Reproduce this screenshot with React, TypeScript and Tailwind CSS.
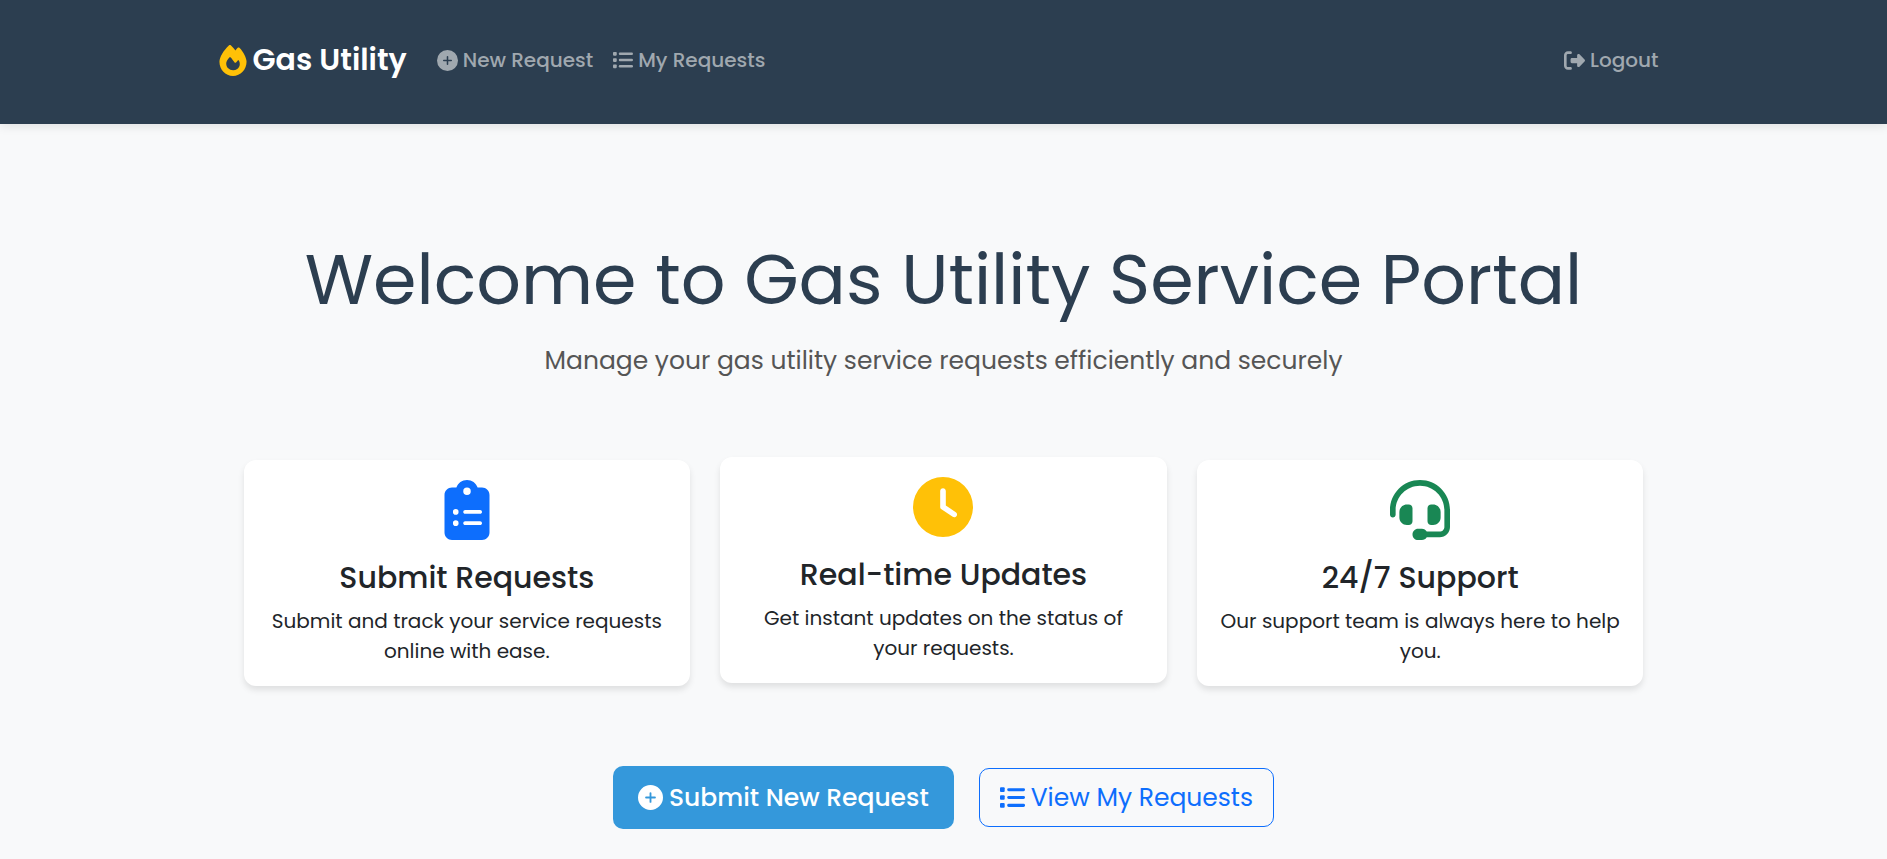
import React from "react";
import {
  FaClipboardList,
  FaClock,
  FaFire,
  FaHeadset,
  FaRightFromBracket,
} from "react-icons/fa6";

function PlusCircle({ className }: { className: string }) {
  return (
    <svg viewBox="0 0 512 512" fill="currentColor" className={className} aria-hidden="true">
      <path
        fillRule="evenodd"
        d="M256 0a256 256 0 1 1 0 512a256 256 0 1 1 0-512zM237 165v72h-72a19 19 0 0 0 0 38h72v72a19 19 0 0 0 38 0v-72h72a19 19 0 0 0 0-38h-72v-72a19 19 0 0 0-38 0z"
      />
    </svg>
  );
}

function ListIcon({ className }: { className: string }) {
  return (
    <svg viewBox="0 0 512 512" fill="currentColor" className={className} aria-hidden="true">
      <rect x="0" y="48" width="96" height="96" rx="20" />
      <rect x="0" y="208" width="96" height="96" rx="20" />
      <rect x="0" y="368" width="96" height="96" rx="20" />
      <rect x="148" y="64" width="364" height="64" rx="30" />
      <rect x="148" y="224" width="364" height="64" rx="30" />
      <rect x="148" y="384" width="364" height="64" rx="30" />
    </svg>
  );
}

const features = [
  {
    title: "Submit Requests",
    text: "Submit and track your service requests online with ease.",
    icon: <FaClipboardList className="size-[60px] text-[#0d6efd]" />,
    raised: false,
  },
  {
    title: "Real-time Updates",
    text: "Get instant updates on the status of your requests.",
    icon: <FaClock className="size-[60px] text-[#ffc107]" />,
    raised: true,
  },
  {
    title: "24/7 Support",
    text: "Our support team is always here to help you.",
    icon: <FaHeadset className="size-[60px] text-[#198754]" />,
    raised: false,
  },
];

const navLink =
  "flex items-center gap-[5px] px-[10px] text-[20px] leading-[30px] font-medium text-[#a0a8af] hover:text-white";

export default function App() {
  return (
    <div className="min-h-screen bg-[#f8f9fa] font-['Poppins','Inter',sans-serif] text-[20px] leading-[30px] text-[#212529]">
      <header className="bg-[#2c3e50] pt-10 pb-11 shadow-[0_2px_10px_rgba(0,0,0,0.1)]">
        <nav className="mx-auto flex max-w-[1450px] items-center">
          <a href="#" className="mr-5 flex items-center gap-[6px] text-[30px] leading-[40px] font-semibold text-white">
            <FaFire className="h-[31px] w-[28px] text-[#ffc107]" />
            Gas Utility
          </a>
          <a href="#new" className={navLink}>
            <PlusCircle className="size-[21px]" />
            New Request
          </a>
          <a href="#requests" className={navLink}>
            <ListIcon className="size-5" />
            My Requests
          </a>
          <a href="#logout" className={navLink + " ml-auto"}>
            <FaRightFromBracket className="size-[21px]" />
            Logout
          </a>
        </nav>
      </header>
      <main className="mx-auto max-w-[1400px] pt-[114px] text-center">
        <h1 className="text-[70px] leading-[84px] font-normal text-[#2c3e50]">
          Welcome to Gas Utility Service Portal
        </h1>
        <p className="mt-5 text-[25px] leading-[38px] text-[#555555]">
          Manage your gas utility service requests efficiently and securely
        </p>
        <section className="mt-20 grid grid-cols-3 gap-[30px]">
          {features.map((f) => (
            <article
              key={f.title}
              className={
                "flex flex-col items-center rounded-xl bg-white p-5 shadow-[0_4px_6px_rgba(0,0,0,0.1)]" +
                (f.raised ? " -translate-y-[3px]" : "")
              }
            >
              {f.icon}
              <h2 className="mt-5 text-[30px] leading-[36px] font-medium">{f.title}</h2>
              <p className="mt-[10px]">{f.text}</p>
            </article>
          ))}
        </section>
        <div className="mt-20 flex items-center justify-center gap-[25px] text-[25px] leading-[37px]">
          <button className="flex items-center gap-[6px] rounded-[10px] bg-[#3498db] px-[25px] py-[13px] font-medium text-white">
            <PlusCircle className="size-[25px]" />
            Submit New Request
          </button>
          <button className="flex items-center gap-[6px] rounded-[10px] border border-[#0d6efd] px-5 py-[10px] text-[#0d6efd]">
            <ListIcon className="size-[25px]" />
            View My Requests
          </button>
        </div>
      </main>
    </div>
  );
}
